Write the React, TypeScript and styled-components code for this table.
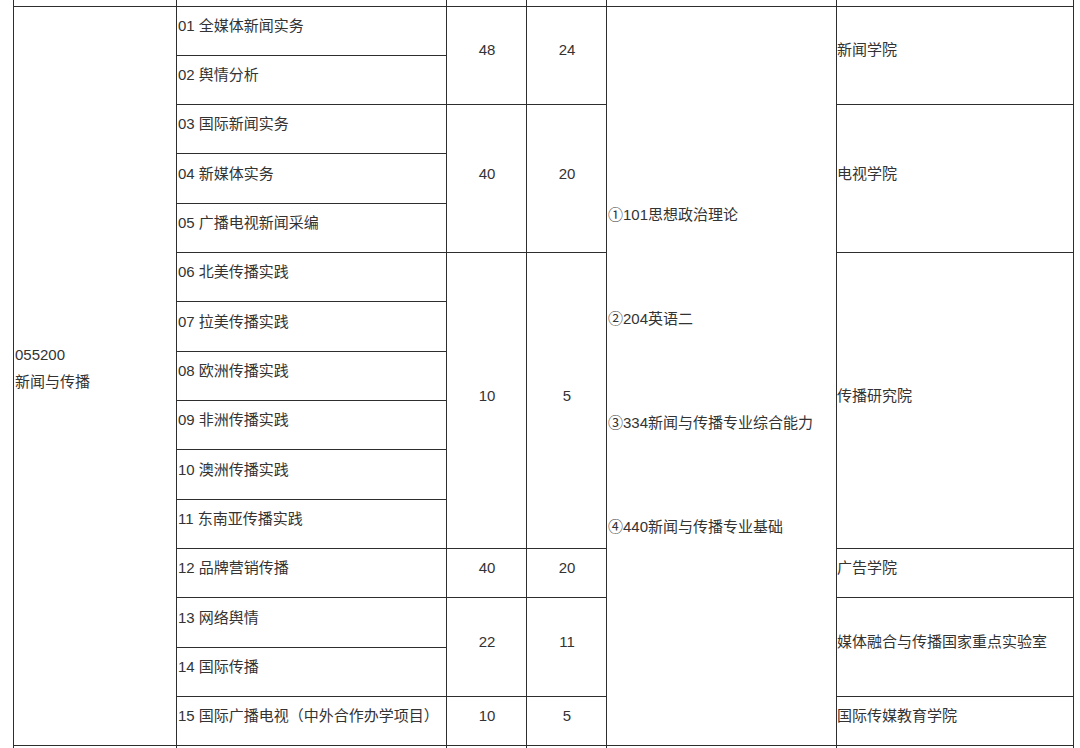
import styled, { createGlobalStyle } from "styled-components";

const GlobalStyle = createGlobalStyle`
  html, body {
    margin: 0;
    padding: 0;
    background: #fff;
  }
`;

const Page = styled.div`
  height: 748px;
  overflow: hidden;
  padding-left: 13px;
  font-family: "Liberation Sans", "Noto Sans CJK SC", sans-serif;
  font-size: 15px;
  color: #333;
`;

const Table = styled.table`
  border-collapse: collapse;
  table-layout: fixed;
  width: 1060px;
`;

const Row = styled.tr<{ $h?: number }>`
  height: ${(p) => p.$h ?? 49.33}px;
`;

const Cell = styled.td<{ $center?: boolean; $edge?: boolean }>`
  border: 1px solid #2e2e2e;
  ${(p) => (p.$edge ? "border-top: none;" : "")}
  padding: 0 0 ${(p) => (p.$edge ? 0 : 10)}px 1px;
  text-align: ${(p) => (p.$center ? "center" : "left")};
  vertical-align: middle;
  line-height: 20px;
  white-space: nowrap;
  overflow: visible;
`;

const MajorCell = styled(Cell)`
  line-height: 27px;
  padding-bottom: 16px;
`;

const Exams = styled.div`
  display: flex;
  flex-direction: column;
  line-height: 104px;
`;

const SchoolCell = styled(Cell)`
  padding-left: 0;
`;

type Group = { n: number; quota: string; free: string };
type School = { n: number; name: string };

const directions = [
  "01 全媒体新闻实务",
  "02 舆情分析",
  "03 国际新闻实务",
  "04 新媒体实务",
  "05 广播电视新闻采编",
  "06 北美传播实践",
  "07 拉美传播实践",
  "08 欧洲传播实践",
  "09 非洲传播实践",
  "10 澳洲传播实践",
  "11 东南亚传播实践",
  "12 品牌营销传播",
  "13 网络舆情",
  "14 国际传播",
  "15 国际广播电视（中外合作办学项目）",
];

const groups: Group[] = [
  { n: 2, quota: "48", free: "24" },
  { n: 3, quota: "40", free: "20" },
  { n: 6, quota: "10", free: "5" },
  { n: 1, quota: "40", free: "20" },
  { n: 2, quota: "22", free: "11" },
  { n: 1, quota: "10", free: "5" },
];

const schools: School[] = [
  { n: 2, name: "新闻学院" },
  { n: 3, name: "电视学院" },
  { n: 6, name: "传播研究院" },
  { n: 1, name: "广告学院" },
  { n: 2, name: "媒体融合与传播国家重点实验室" },
  { n: 1, name: "国际传媒教育学院" },
];

const exams = [
  "①101思想政治理论",
  "②204英语二",
  "③334新闻与传播专业综合能力",
  "④440新闻与传播专业基础",
];

function startsAt(list: { n: number }[]) {
  const map = new Map<number, number>();
  let i = 0;
  list.forEach((g, k) => {
    map.set(i, k);
    i += g.n;
  });
  return map;
}

const groupStart = startsAt(groups);
const schoolStart = startsAt(schools);

function App() {
  return (
    <Page>
      <GlobalStyle />
      <Table>
        <colgroup>
          <col style={{ width: 163 }} />
          <col style={{ width: 270 }} />
          <col style={{ width: 80 }} />
          <col style={{ width: 80 }} />
          <col style={{ width: 230 }} />
          <col style={{ width: 237 }} />
        </colgroup>
        <tbody>
          <Row $h={6}>
            {Array.from({ length: 6 }).map((_, i) => (
              <Cell key={i} $edge />
            ))}
          </Row>
          {directions.map((d, i) => {
            const g = groupStart.get(i);
            const s = schoolStart.get(i);
            return (
              <Row key={d}>
                {i === 0 && (
                  <MajorCell rowSpan={15}>
                    055200
                    <br />
                    新闻与传播
                  </MajorCell>
                )}
                <Cell>{d}</Cell>
                {g !== undefined && (
                  <>
                    <Cell rowSpan={groups[g].n} $center>
                      {groups[g].quota}
                    </Cell>
                    <Cell rowSpan={groups[g].n} $center>
                      {groups[g].free}
                    </Cell>
                  </>
                )}
                {i === 0 && (
                  <Cell rowSpan={15}>
                    <Exams>
                      {exams.map((e) => (
                        <span key={e}>{e}</span>
                      ))}
                    </Exams>
                  </Cell>
                )}
                {s !== undefined && (
                  <SchoolCell rowSpan={schools[s].n}>{schools[s].name}</SchoolCell>
                )}
              </Row>
            );
          })}
          <Row $h={20}>
            {Array.from({ length: 6 }).map((_, i) => (
              <Cell key={i} />
            ))}
          </Row>
        </tbody>
      </Table>
    </Page>
  );
}

export default App;
